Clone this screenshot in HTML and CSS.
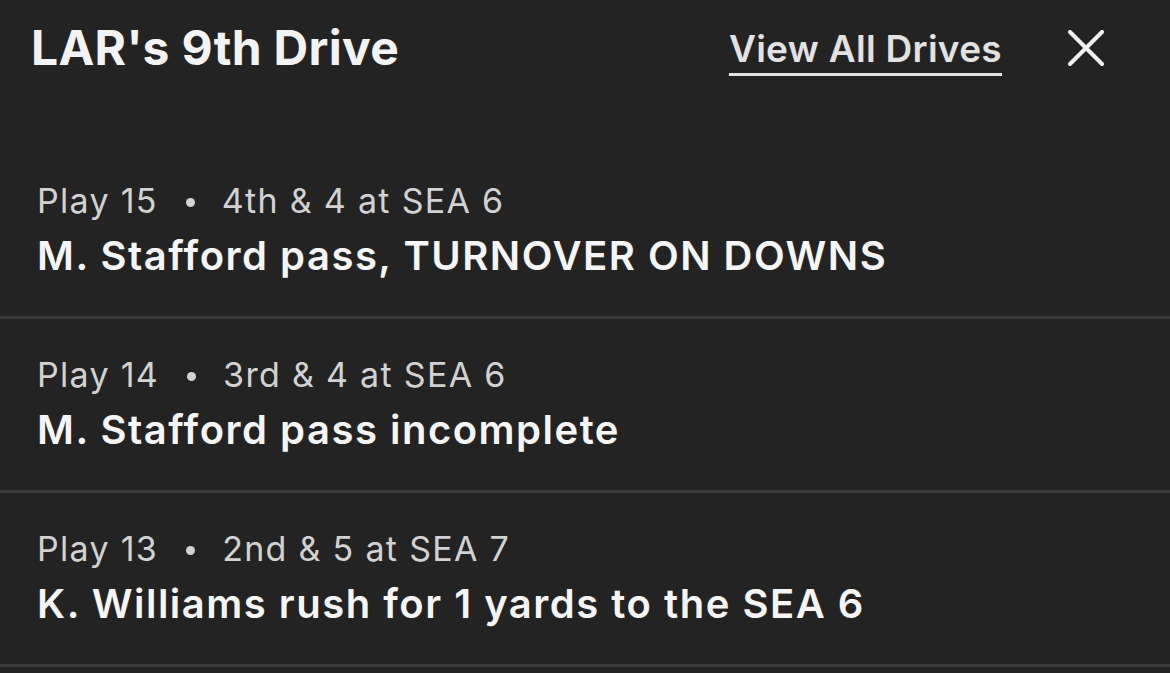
FILE: index.html
```html
<!DOCTYPE html>
<html>
<head>
<meta charset="utf-8">
<link rel="stylesheet" href="styles.css">
</head>
<body>
<div class="panel">
  <header class="header">
    <h1 class="title">LAR's 9th Drive</h1>
    <div class="actions">
      <a class="view-all" href="#">View All Drives</a>
      <button class="close" aria-label="Close">
        <svg width="36" height="36" viewBox="0 0 36 36"><path d="M2 2L34 34M34 2L2 34" stroke="#f2f2f2" stroke-width="4" stroke-linecap="round" fill="none"/></svg>
      </button>
    </div>
  </header>
  <ul class="plays">
    <li class="play">
      <div class="meta"><span>Play 15</span><span class="dot"></span><span>4th &amp; 4 at SEA 6</span></div>
      <div class="desc">M. Stafford pass, TURNOVER ON DOWNS</div>
    </li>
    <li class="play">
      <div class="meta"><span>Play 14</span><span class="dot"></span><span>3rd &amp; 4 at SEA 6</span></div>
      <div class="desc">M. Stafford pass incomplete</div>
    </li>
    <li class="play">
      <div class="meta"><span>Play 13</span><span class="dot"></span><span>2nd &amp; 5 at SEA 7</span></div>
      <div class="desc">K. Williams rush for 1 yards to the SEA 6</div>
    </li>
  </ul>
</div>
</body>
</html>
```

FILE: styles.css
```css
* { box-sizing: border-box; }
html, body { margin: 0; padding: 0; background: #232323; }
body { font-family: Inter, "Noto Sans", sans-serif; color: #f2f2f2; width: 1170px; height: 673px; overflow: hidden; }
.header { height: 145px; display: flex; justify-content: space-between; align-items: flex-start; padding: 0 66px 0 31px; }
.title { margin: 0; font-size: 48px; font-weight: 700; line-height: 96px; color: #f3f3f3; letter-spacing: 0.3px; }
.actions { display: flex; align-items: center; height: 96px; gap: 66px; }
.view-all { color: #e2e2e2; font-size: 37px; font-weight: 600; letter-spacing: 0.3px; text-decoration: underline; text-decoration-thickness: 3px; text-underline-offset: 11px; }
.close { background: none; border: 0; padding: 0; width: 36px; height: 36px; display: flex; }
.plays { list-style: none; margin: 0; padding: 0; }
.play { padding: 33px 37px 28px; border-bottom: 3px solid #3b3b3b; }
.meta { font-size: 34px; line-height: 46px; color: #d2d2d2; font-weight: 400; letter-spacing: 1.3px; display: flex; align-items: center; }
.dot { width: 9px; height: 9px; border-radius: 50%; background: #d2d2d2; margin: 2px 27px 0 28px; }
.desc { font-size: 40px; line-height: 64px; font-weight: 600; color: #f5f5f5; letter-spacing: 1.5px; }
```
